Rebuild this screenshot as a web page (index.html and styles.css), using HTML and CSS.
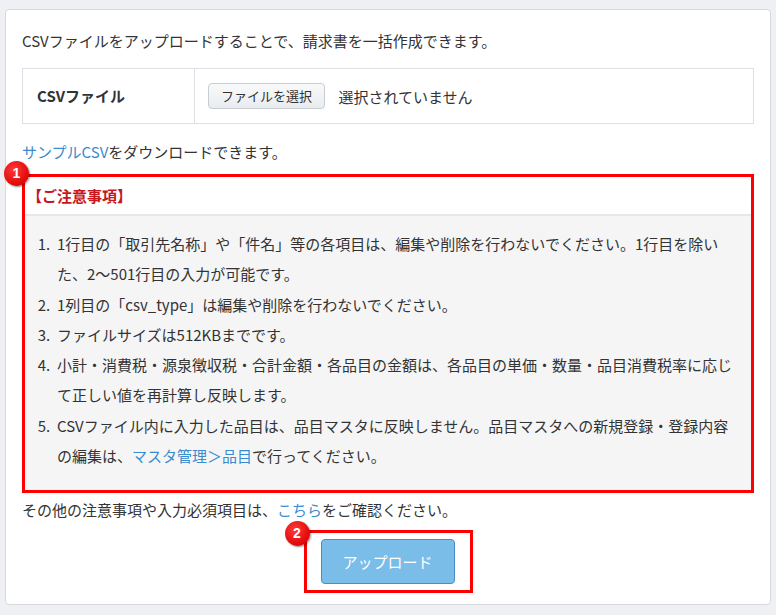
FILE: index.html
```html
<!DOCTYPE html>
<html lang="ja">
<head>
<meta charset="UTF-8" />
<meta name="viewport" content="width=device-width, initial-scale=1" />
<title>CSVアップロード</title>
<link rel="stylesheet" href="styles.css">
</head>
<body>

<div class="card">
  <p class="lead">CSVファイルをアップロードすることで、請求書を一括作成できます。</p>

  <table class="form-table">
    <tr>
      <th>CSVファイル</th>
      <td>
        <span class="file-btn">ファイルを選択</span>
        <span class="file-name">選択されていません</span>
      </td>
    </tr>
  </table>

  <p class="sample"><a href="#">サンプルCSV</a>をダウンロードできます。</p>

  <div class="mark mark-notice">
    <span class="badge">1</span>
    <div class="notice">
      <div class="notice-head">【ご注意事項】</div>
      <ol class="notice-body">
        <li>1行目の「取引先名称」や「件名」等の各項目は、編集や削除を行わないでください。1行目を除いた、2〜501行目の入力が可能です。</li>
        <li>1列目の「csv_type」は編集や削除を行わないでください。</li>
        <li>ファイルサイズは512KBまでです。</li>
        <li>小計・消費税・源泉徴収税・合計金額・各品目の金額は、各品目の単価・数量・品目消費税率に応じて正しい値を再計算し反映します。</li>
        <li>CSVファイル内に入力した品目は、品目マスタに反映しません。品目マスタへの新規登録・登録内容の編集は、<a href="#">マスタ管理＞品目</a>で行ってください。</li>
      </ol>
    </div>
  </div>

  <p class="other">その他の注意事項や入力必須項目は、<a href="#">こちら</a>をご確認ください。</p>

  <div class="actions">
    <div class="mark mark-button">
      <span class="badge">2</span>
      <button class="upload-btn">アップロード</button>
    </div>
  </div>
</div>

</body>
</html>
```

FILE: styles.css
```css
body {
  margin: 0;
  background-color: #eff0f3;
  font-family: "Noto Sans CJK JP", "Noto Sans", sans-serif;
  font-size: 15px;
  color: #333;
}
a {
  color: #3a8bcf;
  text-decoration: none;
}
.card {
  margin: 9px 5px;
  background: #fff;
  border: 1px solid #d6d9dd;
  border-radius: 4px;
  padding: 20px 16px 11px;
}
.card p {
  margin: 0;
  line-height: 22px;
}
.form-table {
  width: 100%;
  margin-top: 16px;
  border-collapse: collapse;
  border: 1px solid #dcdfe3;
}
.form-table th {
  width: 157px;
  padding: 0 0 2px 14px;
  text-align: left;
  font-weight: 700;
  border-right: 1px solid #dcdfe3;
}
.form-table td {
  height: 54px;
  padding: 0 0 0 13px;
}
.file-btn {
  display: inline-block;
  padding: 0 12px;
  height: 24px;
  line-height: 24px;
  font-size: 13px;
  color: #333;
  border: 1px solid #c9cdd2;
  border-radius: 4px;
  background: linear-gradient(#f8f9fa, #e9ecef);
  vertical-align: middle;
}
.file-name {
  margin-left: 10px;
  vertical-align: middle;
}
.card .sample {
  margin-top: 17px;
}
.mark {
  position: relative;
  border: 3px solid #ff0000;
}
.mark-notice {
  margin-top: 11px;
}
.badge {
  position: absolute;
  width: 25px;
  height: 25px;
  border-radius: 50%;
  background: radial-gradient(circle at 40% 35%, #ff3b3b 0%, #e50d0d 60%, #c40000 100%);
  box-shadow: 1px 1px 2px rgba(0, 0, 0, 0.45);
  color: #fff;
  font-family: "Liberation Sans", sans-serif;
  font-weight: 700;
  font-size: 14px;
  line-height: 25px;
  text-align: center;
}
.mark-notice .badge {
  left: -21px;
  top: -16px;
}
.notice-head {
  height: 37px;
  line-height: 37px;
  padding-left: 2px;
  font-weight: 700;
  color: #c8161e;
  background: #fff;
  border-bottom: 2px solid #e4e7eb;
}
.notice-body {
  margin: 0;
  padding: 13px 10px 19px 32px;
  background: #f5f5f6;
  line-height: 30.3px;
}
.notice-body li::marker {
  content: counter(list-item) ".\00a0\00a0";
}
.card .other {
  margin-top: 6px;
}
.actions {
  display: flex;
  justify-content: center;
  margin-top: 9px;
}
.mark-button {
  padding: 6px 15px 6px 14px;
}
.mark-button .badge {
  left: -22px;
  top: -12px;
}
.upload-btn {
  display: block;
  width: 134px;
  height: 45px;
  background: #7bbde9;
  border: 1px solid #4a8dc4;
  border-radius: 4px;
  color: #fff;
  font-family: inherit;
  font-size: 15px;
}
```
